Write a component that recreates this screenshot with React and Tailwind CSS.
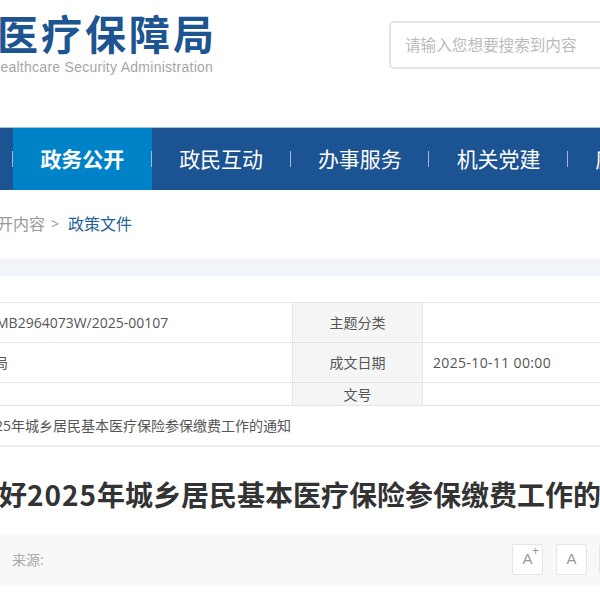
import React from "react";

const navItems = ["政务公开", "政民互动", "办事服务", "机关党建", "廉政建设"];

const App = () => {
  return (
    <div className="w-[600px] h-[600px] overflow-hidden bg-white text-[#555] font-['Open_Sans','Noto_Sans_CJK_SC',sans-serif]">
      {/* header */}
      <div className="flex h-[128px] border-b border-[#a9c4e0]">
        <div className="w-[389px] shrink-0 pt-[8px] overflow-hidden">
          <div className="-ml-[3px] whitespace-nowrap text-[41px] leading-[48px] tracking-[3px] font-bold text-[#1c5591] font-['Noto_Sans_CJK_SC',sans-serif]">
            医疗保障局
          </div>
          <div className="-ml-[10px] mt-[3px] whitespace-nowrap text-[14px] leading-[16px] tracking-[0.27px] text-[#a5a5a5] font-['Liberation_Sans',sans-serif]">
            Healthcare Security Administration
          </div>
        </div>
        <div className="flex-1 pt-[21px]">
          <input
            readOnly
            placeholder="请输入您想要搜索到内容"
            className="w-[260px] h-[48px] pl-[14px] border-2 border-[#dfe6ef] rounded-[5px] text-[15.6px] placeholder:text-[#bbb] outline-none"
          />
        </div>
      </div>

      {/* nav */}
      <div className="flex h-[62px] bg-[#1c5392] text-white whitespace-nowrap">
        <div className="w-[13px] shrink-0 flex items-center">
          <span className="ml-[12px] w-px h-[16px] bg-[#9fb8d4]" />
        </div>
        {navItems.map((item, i) => (
          <div key={item} className="relative w-[138.75px] shrink-0">
            <div
              className={
                i === 0
                  ? "h-full pt-px flex items-center justify-center bg-[#0082c8] font-bold text-[21px]"
                  : "h-full pt-px flex items-center justify-center text-[21px]"
              }
            >
              {item}
            </div>
            <span className="absolute right-0 top-[23px] w-px h-[16px] bg-[#9fb8d4]" />
          </div>
        ))}
      </div>

      {/* breadcrumb */}
      <div className="flex items-center h-[69px] pb-[2px] text-[16px] whitespace-nowrap">
        <span className="-ml-[3px] text-[#999]">开内容</span>
        <span className="ml-[6px] text-[#999] text-[14px]">&gt;</span>
        <span className="ml-[9px] text-[#1f6299]">政策文件</span>
      </div>

      <div className="h-[17px] bg-[#f1f4f8]" />

      {/* info table */}
      <div className="mt-[26px] border-t border-[#e5e5e5] text-[14px]">
        <div className="flex h-[40px] border-b border-[#e5e5e5]">
          <div className="w-[292px] shrink-0 flex items-center whitespace-nowrap overflow-hidden">
            <span className="-ml-[4px]">MB2964073W/2025-00107</span>
          </div>
          <div className="w-[131px] shrink-0 flex items-center justify-center bg-[#f5f5f5] border-x border-[#e5e5e5]">
            主题分类
          </div>
          <div className="flex-1" />
        </div>
        <div className="flex h-[40px] border-b border-[#e5e5e5]">
          <div className="w-[292px] shrink-0 flex items-center overflow-hidden">
            <span className="-ml-[6px]">局</span>
          </div>
          <div className="w-[131px] shrink-0 flex items-center justify-center bg-[#f5f5f5] border-x border-[#e5e5e5]">
            成文日期
          </div>
          <div className="flex-1 flex items-center pl-[10px] tracking-[0.35px]">2025-10-11 00:00</div>
        </div>
        <div className="flex h-[23px] border-b border-[#e5e5e5]">
          <div className="w-[292px] shrink-0" />
          <div className="w-[131px] shrink-0 flex items-center justify-center bg-[#f5f5f5] border-x border-[#e5e5e5]">
            文号
          </div>
          <div className="flex-1" />
        </div>
        <div className="flex items-center h-[41px] border-b-2 border-[#eeeeee] whitespace-nowrap">
          <span className="-ml-[5px]">25年城乡居民基本医疗保险参保缴费工作的通知</span>
        </div>
      </div>

      {/* title */}
      <div className="mt-[23px] h-[48px] whitespace-nowrap text-[28px] leading-[48px] font-bold text-[#333] font-['Noto_Sans_CJK_SC',sans-serif]">
        <span className="block -ml-[29px]">
          做好<span className="tracking-[1px]">2025</span>年城乡居民基本医疗保险参保缴费工作的通知
        </span>
      </div>

      {/* source bar */}
      <div className="mt-[16px] flex items-center justify-between h-[51px] bg-[#f8f8f8] pl-[12px]">
        <span className="text-[14px] text-[#aaa]">来源:</span>
        <div className="flex gap-[13px] w-[88px] shrink-0 font-['Liberation_Sans',sans-serif]">
          <div className="relative w-[31px] h-[31px] shrink-0 flex items-center justify-center bg-white border border-[#e5e5e5] rounded-[2px] text-[15px] text-[#999]">
            A
            <span className="absolute top-[-1px] right-[3px] text-[12px] leading-[14px]">+</span>
          </div>
          <div className="w-[31px] h-[31px] shrink-0 flex items-center justify-center bg-white border border-[#e5e5e5] rounded-[2px] text-[15px] text-[#999]">
            A
          </div>
          <div className="-ml-px w-[31px] h-[31px] shrink-0 bg-white border border-[#e5e5e5] rounded-[2px]" />
        </div>
      </div>
    </div>
  );
};

export default App;
